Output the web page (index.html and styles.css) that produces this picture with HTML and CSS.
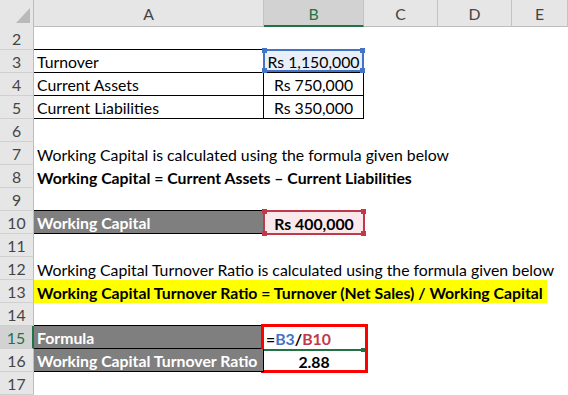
FILE: index.html
```html
<!DOCTYPE html>
<html>
<head>
<meta charset="utf-8">
<link rel="stylesheet" href="styles.css">
</head>
<body>
<div class="sheet">
  <div class="row head">
    <div class="corner"><svg width="34" height="26" viewBox="0 0 34 26"><polygon points="30,8 30,23 16,23" fill="#b9b9b9"/></svg></div>
    <div class="ch">A</div>
    <div class="ch sel">B</div>
    <div class="ch">C</div>
    <div class="ch">D</div>
    <div class="ch">E</div>
  </div>

  <div class="row r2">
    <div class="rh">2</div>
    <div class="c bb"></div><div class="c bb"></div><div class="c"></div><div class="c"></div><div class="c"></div>
  </div>
  <div class="row">
    <div class="rh">3</div>
    <div class="c bb br">Turnover</div>
    <div class="c bb br num ref-blue">Rs 1,150,000<span class="box blue"><i class="h tl"></i><i class="h tr"></i><i class="h bl"></i><i class="h br2"></i></span></div>
    <div class="c"></div><div class="c"></div><div class="c"></div>
  </div>
  <div class="row">
    <div class="rh">4</div>
    <div class="c bb br">Current Assets</div>
    <div class="c bb br num">Rs 750,000</div>
    <div class="c"></div><div class="c"></div><div class="c"></div>
  </div>
  <div class="row">
    <div class="rh">5</div>
    <div class="c bb br">Current Liabilities</div>
    <div class="c bb br num">Rs 350,000</div>
    <div class="c"></div><div class="c"></div><div class="c"></div>
  </div>
  <div class="row">
    <div class="rh">6</div>
    <div class="c"></div><div class="c"></div><div class="c"></div><div class="c"></div><div class="c"></div>
  </div>
  <div class="row">
    <div class="rh">7</div>
    <div class="c wide">Working Capital is calculated using the formula given below</div>
  </div>
  <div class="row">
    <div class="rh">8</div>
    <div class="c wide bold">Working Capital = Current Assets – Current Liabilities</div>
  </div>
  <div class="row">
    <div class="rh">9</div>
    <div class="c bb"></div><div class="c"></div><div class="c"></div><div class="c"></div><div class="c"></div>
  </div>
  <div class="row">
    <div class="rh">10</div>
    <div class="c bb br dark">Working Capital</div>
    <div class="c num bold ref-red">Rs 400,000<span class="box red"><i class="h tl"></i><i class="h tr"></i><i class="h bl"></i><i class="h br2"></i></span></div>
    <div class="c"></div><div class="c"></div><div class="c"></div>
  </div>
  <div class="row">
    <div class="rh">11</div>
    <div class="c"></div><div class="c"></div><div class="c"></div><div class="c"></div><div class="c"></div>
  </div>
  <div class="row">
    <div class="rh">12</div>
    <div class="c wide">Working Capital Turnover Ratio is calculated using the formula given below</div>
  </div>
  <div class="row">
    <div class="rh">13</div>
    <div class="c wide nopad bold"><span class="yellow">Working Capital Turnover Ratio = Turnover (Net Sales) / Working Capital</span></div>
  </div>
  <div class="row">
    <div class="rh">14</div>
    <div class="c bb"></div><div class="c"></div><div class="c"></div><div class="c"></div><div class="c"></div>
  </div>
  <div class="row">
    <div class="rh active">15</div>
    <div class="c bb br dark">Formula</div>
    <div class="c bold formula"><span class="k">=</span><span class="fb">B3</span><span class="k">/</span><span class="fr">B10</span><span class="activeline"></span><span class="annot"></span></div>
    <div class="c"></div><div class="c"></div><div class="c"></div>
  </div>
  <div class="row">
    <div class="rh">16</div>
    <div class="c bb br dark">Working Capital Turnover Ratio</div>
    <div class="c num bold">2.88</div>
    <div class="c"></div><div class="c"></div><div class="c"></div>
  </div>
  <div class="row">
    <div class="rh">17</div>
    <div class="c"></div><div class="c"></div><div class="c"></div><div class="c"></div><div class="c"></div>
  </div>
</div>
</body>
</html>
```

FILE: styles.css
```css
* { box-sizing: border-box; }
html, body { margin: 0; padding: 0; background: #fff; }
body {
  width: 568px;
  height: 395px;
  overflow: hidden;
  font-family: Lato, "Liberation Sans", sans-serif;
  font-size: 15.8px;
  color: #000;
}
.sheet { display: flex; flex-direction: column; }
.row {
  display: grid;
  grid-template-columns: 34px 230px 100px 74px 74px 56px;
  height: 23px;
}
.row.head { height: 26px; }
.row.r2 { height: 24px; }

.corner {
  background: #e6e6e6;
  border-right: 1px solid #bdbdbd;
  border-bottom: 1px solid #bdbdbd;
}
.corner svg { display: block; }
.ch {
  background: #e6e6e6;
  border-right: 1px solid #c4c4c4;
  border-bottom: 1px solid #bdbdbd;
  display: flex;
  align-items: center;
  justify-content: center;
  color: #444;
  padding-top: 1px;
}
.ch.sel {
  background: #d2d2d2;
  color: #217346;
  border-bottom: 2px solid #217346;
}
.rh {
  background: #e6e6e6;
  border-right: 1px solid #bdbdbd;
  border-bottom: 1px solid #d0d0d0;
  display: flex;
  align-items: center;
  justify-content: center;
  color: #444;
  padding-top: 1px;
}
.rh.active {
  background: #d2d2d2;
  color: #217346;
  border-right: 2px solid #217346;
}

.c {
  position: relative;
  display: flex;
  align-items: center;
  padding: 1px 3px 0 3px;
  white-space: nowrap;
}
.c.bb { border-bottom: 1px solid #000; }
.c.br { border-right: 1px solid #000; }
.c.num { justify-content: center; padding: 1px 0 0 0; }
.c.wide { grid-column: 2 / -1; }
.c.nopad { padding: 0; align-items: stretch; }
.bold { font-weight: bold; }
.c.dark { background: #7f7f7f; color: #fff; font-weight: bold; }

.yellow {
  background: #ffff00;
  display: flex;
  align-items: center;
  padding: 1px 4px 0 3px;
}

.ref-blue { background: #e9eff9; }
.ref-red { background: #fbe8ea; }

.box {
  position: absolute;
  top: -1px; left: -1px; right: -1px; bottom: 0;
  border: 2px solid;
}
.box.blue { border-color: #4472c4; }
.box.red { border-color: #c0394b; }
.box.red { top: -1px; bottom: -1px; }
.h {
  position: absolute;
  width: 5px; height: 5px;
}
.blue .h { background: #4472c4; }
.red .h { background: #c0394b; }
.h.tl { left: -3px; top: -3px; }
.h.tr { right: -3px; top: -3px; }
.h.bl { left: -3px; bottom: -3px; }
.h.br2 { right: -3px; bottom: -3px; }

.formula { padding-left: 2px; }
.k { color: #000; }
.fb { color: #4472c4; }
.fr { color: #c0394b; }
.activeline {
  position: absolute;
  left: 0; right: 3px; bottom: -2px;
  height: 2px;
  background: #217346;
}
.activeline::after {
  content: "";
  position: absolute;
  right: -4px; top: -1px;
  width: 4px; height: 4px;
  background: #217346;
}
.annot {
  position: absolute;
  left: -3px; top: -2px; right: -4px; bottom: -24px;
  border: 3px solid #ff0000;
}
```
